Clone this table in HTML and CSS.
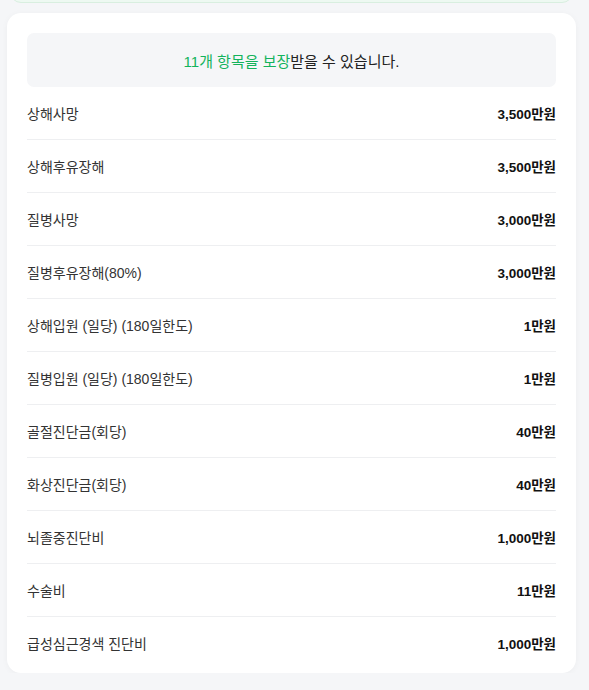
FILE: index.html
```html
<!DOCTYPE html>
<html lang="ko">
<head>
<meta charset="utf-8">
<link rel="stylesheet" href="styles.css">
</head>
<body>
<div class="page">
  <div class="prev-card"></div>
  <div class="card">
    <div class="summary"><span class="hl">11개 항목을 보장</span>받을 수 있습니다.</div>
    <ul class="list">
      <li class="row"><span class="label">상해사망</span><span class="value">3,500만원</span></li>
      <li class="row"><span class="label">상해후유장해</span><span class="value">3,500만원</span></li>
      <li class="row"><span class="label">질병사망</span><span class="value">3,000만원</span></li>
      <li class="row"><span class="label">질병후유장해(80%)</span><span class="value">3,000만원</span></li>
      <li class="row"><span class="label">상해입원 (일당) (180일한도)</span><span class="value">1만원</span></li>
      <li class="row"><span class="label">질병입원 (일당) (180일한도)</span><span class="value">1만원</span></li>
      <li class="row"><span class="label">골절진단금(회당)</span><span class="value">40만원</span></li>
      <li class="row"><span class="label">화상진단금(회당)</span><span class="value">40만원</span></li>
      <li class="row"><span class="label">뇌졸중진단비</span><span class="value">1,000만원</span></li>
      <li class="row"><span class="label">수술비</span><span class="value">11만원</span></li>
      <li class="row"><span class="label">급성심근경색 진단비</span><span class="value">1,000만원</span></li>
    </ul>
  </div>
</div>
</body>
</html>
```
FILE: styles.css
```css
html, body {
  margin: 0;
  padding: 0;
  background: #f5f6f8;
  font-family: "Liberation Sans", "Noto Sans CJK KR", sans-serif;
}
.page {
  padding: 0 13px 0 7px;
}
.prev-card {
  height: 20px;
  margin: -19px 3px 0 3px;
  background: #eef9f2;
  border: 1px solid #d9efe0;
  border-radius: 14px;
}
.card {
  margin-top: 10px;
  background: #fff;
  border-radius: 14px;
  padding: 20px 20px 4px;
  box-shadow: 0 1px 6px rgba(0, 0, 0, 0.04);
}
.summary {
  height: 54px;
  display: flex;
  align-items: center;
  justify-content: center;
  background: #f5f6f8;
  border-radius: 7px;
  font-size: 15px;
  color: #222;
}
.hl {
  color: #13b35c;
}
.list {
  list-style: none;
  margin: 0;
  padding: 0;
}
.row {
  height: 52px;
  display: flex;
  align-items: center;
  justify-content: space-between;
  border-bottom: 1px solid #eeeff1;
}
.row:last-child {
  border-bottom: none;
}
.label {
  color: #333;
  font-size: 14px;
}
.value {
  color: #111;
  font-weight: bold;
  font-size: 13.5px;
}
```
